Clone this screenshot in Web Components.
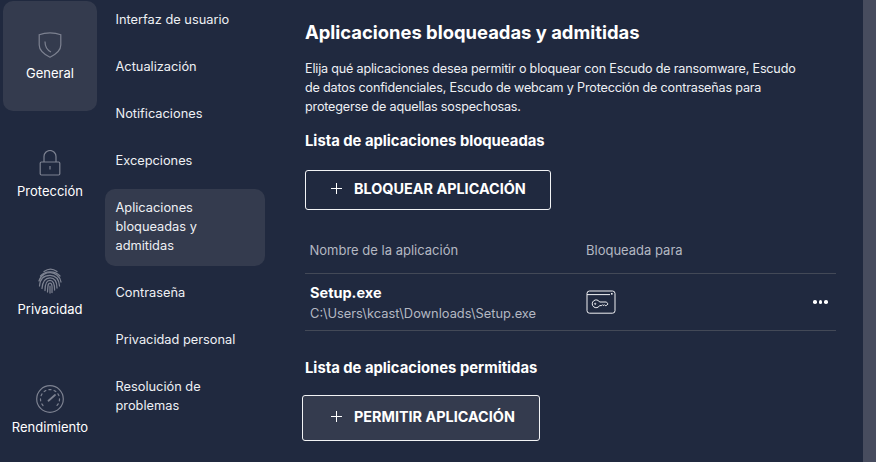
<!DOCTYPE html>
<html lang="es"><head><meta charset="utf-8">
<style>
html,body{margin:0;height:100%;background:#20293f;overflow:hidden}
body{font-family:Inter,Lato,sans-serif;color:#fff}
</style></head>
<body>
<app-shell>
  <side-nav slot="rail">
    <rail-item active label="General"><svg viewBox="0 0 26 26" width="26" height="26" fill="none" stroke="#7d8291" stroke-width="1.2"><path d="M13 .8C9.5 .8 5.5 1.4 2.2 2.7V13C2.2 18 7.5 22.5 13 25.2C18.5 22.5 23.8 18 23.8 13V2.7C20.5 1.4 16.5 .8 13 .8Z"/><path d="M8 9.5C8 14 10 18 14 20"/></svg></rail-item>
    <rail-item label="Protección"><svg viewBox="0 0 26 26" width="26" height="26" fill="none" stroke="#7d8291" stroke-width="1.2"><rect x="3.2" y="12" width="19.6" height="13" rx="1.2"/><path d="M7 12V6.5a6 6 0 0 1 12 0V12"/><path d="M13 16v3.5"/></svg></rail-item>
    <rail-item label="Privacidad"><svg viewBox="0 0 26 26" width="26" height="26" fill="none" stroke="#7d8291" stroke-width="1.25" stroke-linecap="round"><path d="M7 3.5C11 .5 16 .5 20 3.5"/><path d="M3.5 8C8 2.5 18 2.2 23 8"/><path d="M2 13C4 6 10 4.5 13.5 4.7C18 5 23 8 24 14"/><path d="M2.5 18C3 11 7 7.3 13 7.3C19 7.3 22 11.5 22.5 18"/><path d="M5 20.5C5.5 14 7.5 9.8 13 9.8C18 9.8 20 13 20 20"/><path d="M8 22.5C8 16 9 12.4 13 12.4C16.5 12.4 17.6 15.5 17.6 22"/><path d="M10.5 24C11 18 10.6 15 13 15C15.3 15 15.2 19 15 24.5"/><path d="M13 18V25"/></svg></rail-item>
    <rail-item label="Rendimiento" big><svg viewBox="0 0 28 28" width="28" height="28" fill="none" stroke="#7d8291" stroke-width="1.2" stroke-linecap="round"><circle cx="14" cy="14" r="13.3"/><path d="M7 20.5A9.5 9.5 0 1 1 21 20.5" stroke-dasharray="2 3.2"/><path d="M12.5 15.7L19 10" stroke-width="1.8"/></svg></rail-item>
  </side-nav>
  <sub-nav slot="sub">
    <sub-item>Interfaz de usuario</sub-item>
    <sub-item>Actualización</sub-item>
    <sub-item>Notificaciones</sub-item>
    <sub-item>Excepciones</sub-item>
    <sub-item active>Aplicaciones<br>bloqueadas y<br>admitidas</sub-item>
    <sub-item>Contraseña</sub-item>
    <sub-item>Privacidad personal</sub-item>
    <sub-item>Resolución de<br>problemas</sub-item>
  </sub-nav>
  <app-panel slot="main"></app-panel>
</app-shell>
<script>
function def(name, css, html, init){
  customElements.define(name, class extends HTMLElement{
    constructor(){super();this.attachShadow({mode:'open'}).innerHTML='<style>'+css+'</style>'+html;}
    connectedCallback(){ if(init) init.call(this); }
  });
}
def('app-shell',`:host{display:flex;height:462px;width:876px;overflow:hidden}
.main{flex:1;min-width:0}
.sb{width:13px;background:#474c5e;flex:none}`,
`<slot name="rail"></slot><slot name="sub"></slot><div class="main"><slot name="main"></slot></div><div class="sb"></div>`);
def('side-nav',`:host{display:flex;flex-direction:column;gap:8px;width:94px;flex:none;margin:1px 8px 0 3px;height:0}`,`<slot></slot>`);
def('rail-item',`:host{display:flex;flex:none;flex-direction:column;align-items:center;justify-content:center;height:110px;border-radius:10px;box-sizing:border-box;font-size:13px;line-height:18px;color:#fff;padding-top:2px}
:host([active]){background:#343b4e}
.i{height:26px;display:flex;align-items:center;justify-content:center;margin-bottom:6px}`,
`<div class="i"><slot></slot></div><span id="l"></span>`,
function(){this.shadowRoot.getElementById('l').textContent=this.getAttribute('label');});
def('sub-nav',`:host{display:flex;flex-direction:column;gap:8px;width:160px;flex:none;margin:0 40px 0 0;height:0}`,`<slot></slot>`);
def('sub-item',`:host{display:block;flex:none;padding:10px 10px 10px 10.5px;font-size:12.8px;line-height:19px;border-radius:10px;color:#eef0f4}
:host([active]){background:#343b4e;margin-top:1px;margin-bottom:-1px;padding-top:9px;padding-bottom:11px}`,`<slot></slot>`);
def('app-button',`:host{display:inline-flex;align-items:center;box-sizing:border-box;border:1px solid #f2f3f5;border-radius:3px;font-size:14.4px;font-weight:700;color:#fff;height:40px;padding-left:25px;padding-bottom:3px}
:host([hover]){background:#343b4e}
svg{margin-right:12px;flex:none}`,
`<svg width="11" height="11" viewBox="0 0 11 11" stroke="#fff" stroke-width="1" fill="none"><path d="M5.5 0V11M0 5.5H11"/></svg><slot></slot>`);
def('app-row',`:host{display:grid;grid-template-columns:281px 1fr auto;align-items:center;height:58px;box-sizing:border-box;border-top:1px solid #434957;border-bottom:1px solid #434957}
.n{font-size:14.5px;font-weight:700;line-height:20px}
.p{font-size:12.85px;line-height:19px;color:#b4b8c2;margin-top:1px}
.k{display:flex}
.d{display:flex;gap:2px;margin-right:8px}
.d i{width:3.6px;height:3.6px;border-radius:50%;background:#fff;display:block}
.a{padding:2px 0 0 5px}`,
`<div class="a"><div class="n"><slot name="name"></slot></div><div class="p"><slot name="path"></slot></div></div>
<div class="k"><svg width="30" height="24" viewBox="0 0 30 24" fill="none" stroke="#f0f1f4" stroke-width="1"><rect x="1" y="1" width="28" height="22.2" rx="2.5"/><path d="M1 4.6H24"/><rect x="25" y="3" width="1.6" height="1.6" fill="#f0f1f4" stroke="none"/><path d="M13.6 12h6.6l1.9 1.8l-1.9 1.8h-1l-.9-.9l-.9.9l-.9-.9l-.9.9h-2a3.9 3.9 0 1 1 0-3.6Z"/><circle cx="9.2" cy="13.8" r=".6"/></svg></div>
<div class="d"><i></i><i></i><i></i></div>`);
def('app-panel',`:host{display:block;width:531px;padding-top:20px}
h1{font-size:18.4px;line-height:24px;font-weight:700;margin:0 0 15px}
p{font-size:12.6px;letter-spacing:-.18px;line-height:19px;margin:0;color:#eef0f4}
h2{font-size:14.8px;line-height:20px;font-weight:700;margin:0}
.h{display:grid;grid-template-columns:281px 1fr;font-size:13px;line-height:18px;color:#b4b8c2;height:43px;align-items:center;box-sizing:border-box;padding-bottom:4px;margin-top:20px}
.h span:first-child{padding-left:4.5px}
.b1{width:246px;margin-top:19px;display:flex;padding-bottom:4px}
.b2{width:238px;height:46px;margin:17px 0 0 -3px;display:flex;padding-left:28px}
.l2{margin-top:27px}`,
`<h1>Aplicaciones bloqueadas y admitidas</h1>
<p>Elija qué aplicaciones desea permitir o bloquear con Escudo de ransomware, Escudo<br>de datos confidenciales, Escudo de webcam y Protección de contraseñas para<br>protegerse de aquellas sospechosas.</p>
<h2 style="margin-top:15px">Lista de aplicaciones bloqueadas</h2>
<app-button class="b1">BLOQUEAR APLICACIÓN</app-button>
<div class="h"><span>Nombre de la aplicación</span><span>Bloqueada para</span></div>
<app-row><span slot="name">Setup.exe</span><span slot="path">C:\\Users\\kcast\\Downloads\\Setup.exe</span></app-row>
<h2 class="l2">Lista de aplicaciones permitidas</h2>
<app-button class="b2" hover>PERMITIR APLICACIÓN</app-button>`);
</script>
</body></html>
